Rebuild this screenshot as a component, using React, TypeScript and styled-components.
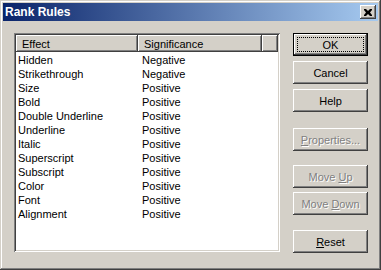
import React from "react";
import styled, { createGlobalStyle } from "styled-components";

const Global = createGlobalStyle`
  html, body { margin: 0; padding: 0; background: #d4d0c8; }
  body { font-family: "Liberation Sans", Arial, sans-serif; font-size: 11px; }
  * { box-sizing: border-box; }
`;

const Window = styled.div`
  width: 381px;
  height: 270px;
  background: #d4d0c8;
  padding: 3px;
  display: flex;
  flex-direction: column;
  box-shadow: inset -1px -1px 0 #404040, inset 1px 1px 0 #d4d0c8,
    inset -2px -2px 0 #808080, inset 2px 2px 0 #ffffff;
`;

const TitleBar = styled.div`
  height: 18px;
  display: flex;
  align-items: center;
  justify-content: space-between;
  padding: 0 2px 0 2px;
  background: linear-gradient(to right, #0a246a, #a6caf0);
`;

const Title = styled.span`
  color: #fff;
  font-weight: bold;
  font-size: 12px;
`;

const CloseBtn = styled.div`
  width: 16px;
  height: 14px;
  background: #d4d0c8;
  display: flex;
  align-items: center;
  justify-content: center;
  box-shadow: inset -1px -1px 0 #404040, inset 1px 1px 0 #ffffff,
    inset -2px -2px 0 #808080;
`;

const Body = styled.div`
  flex: 1;
  display: flex;
  padding: 12px 10px 0 11px;
  gap: 13px;
`;

const ListBox = styled.div`
  width: 266px;
  height: 219px;
  background: #fff;
  padding: 2px;
  display: flex;
  flex-direction: column;
  box-shadow: inset 1px 1px 0 #808080, inset -1px -1px 0 #ffffff,
    inset 2px 2px 0 #404040, inset -2px -2px 0 #d4d0c8;
`;

const Header = styled.div`
  display: flex;
  height: 17px;
`;

const HeaderCell = styled.div<{ $w?: number }>`
  ${(p) => (p.$w ? `width: ${p.$w}px;` : "flex: 1;")}
  height: 17px;
  background: #d4d0c8;
  color: #000;
  padding-left: ${(p) => (p.$w ? 6 : 0)}px;
  display: flex;
  align-items: center;
  box-shadow: inset -1px -1px 0 #404040, inset 1px 1px 0 #ffffff,
    inset -2px -2px 0 #808080;
`;

const Rows = styled.div`
  padding-top: 1px;
`;

const Row = styled.div`
  display: flex;
  height: 14px;
  line-height: 14px;
  color: #000;
`;

const Cell = styled.div<{ $w: number; $pl: number }>`
  width: ${(p) => p.$w}px;
  padding-left: ${(p) => p.$pl}px;
  white-space: nowrap;
`;

const Buttons = styled.div`
  display: flex;
  flex-direction: column;
`;

const Button = styled.div<{ $mt: number; $default?: boolean; $disabled?: boolean }>`
  position: relative;
  width: 75px;
  height: 23px;
  margin-top: ${(p) => p.$mt}px;
  display: flex;
  align-items: center;
  justify-content: center;
  background: #d4d0c8;
  color: ${(p) => (p.$disabled ? "#808080" : "#000")};
  text-shadow: ${(p) => (p.$disabled ? "1px 1px 0 #ffffff" : "none")};
  box-shadow: ${(p) =>
    p.$default
      ? "inset 0 0 0 1px #000, inset -2px -2px 0 #404040, inset 2px 2px 0 #ffffff, inset -3px -3px 0 #808080"
      : "inset -1px -1px 0 #404040, inset 1px 1px 0 #ffffff, inset -2px -2px 0 #808080"};
`;

const Focus = styled.span`
  position: absolute;
  left: 4px;
  top: 4px;
  right: 4px;
  bottom: 4px;
  border: 1px dotted #000;
`;

const Acc = styled.span`
  text-decoration: underline;
`;

const items: [string, string][] = [
  ["Hidden", "Negative"],
  ["Strikethrough", "Negative"],
  ["Size", "Positive"],
  ["Bold", "Positive"],
  ["Double Underline", "Positive"],
  ["Underline", "Positive"],
  ["Italic", "Positive"],
  ["Superscript", "Positive"],
  ["Subscript", "Positive"],
  ["Color", "Positive"],
  ["Font", "Positive"],
  ["Alignment", "Positive"],
];

export default function App() {
  return (
    <>
      <Global />
      <Window>
        <TitleBar>
          <Title>Rank Rules</Title>
          <CloseBtn>
            <svg width="8" height="7" viewBox="0 0 8 7">
              <path d="M0 0h2l2 2 2-2h2v1L6 3.5 8 6v1H6L4 5 2 7H0V6l2-2.5L0 1z" fill="#000" />
            </svg>
          </CloseBtn>
        </TitleBar>
        <Body>
          <ListBox>
            <Header>
              <HeaderCell $w={122}>Effect</HeaderCell>
              <HeaderCell $w={124}>Significance</HeaderCell>
              <HeaderCell />
            </Header>
            <Rows>
              {items.map(([a, b]) => (
                <Row key={a}>
                  <Cell $w={124} $pl={2}>{a}</Cell>
                  <Cell $w={124} $pl={2}>{b}</Cell>
                </Row>
              ))}
            </Rows>
          </ListBox>
          <Buttons>
            <Button $mt={0} $default>
              OK
              <Focus />
            </Button>
            <Button $mt={5}>Cancel</Button>
            <Button $mt={5}>Help</Button>
            <Button $mt={16} $disabled>
              <span><Acc>P</Acc>roperties...</span>
            </Button>
            <Button $mt={14} $disabled>
              <span>Move <Acc>U</Acc>p</span>
            </Button>
            <Button $mt={4} $disabled>
              <span>Move <Acc>D</Acc>own</span>
            </Button>
            <Button $mt={15}>
              <span><Acc>R</Acc>eset</span>
            </Button>
          </Buttons>
        </Body>
      </Window>
    </>
  );
}
